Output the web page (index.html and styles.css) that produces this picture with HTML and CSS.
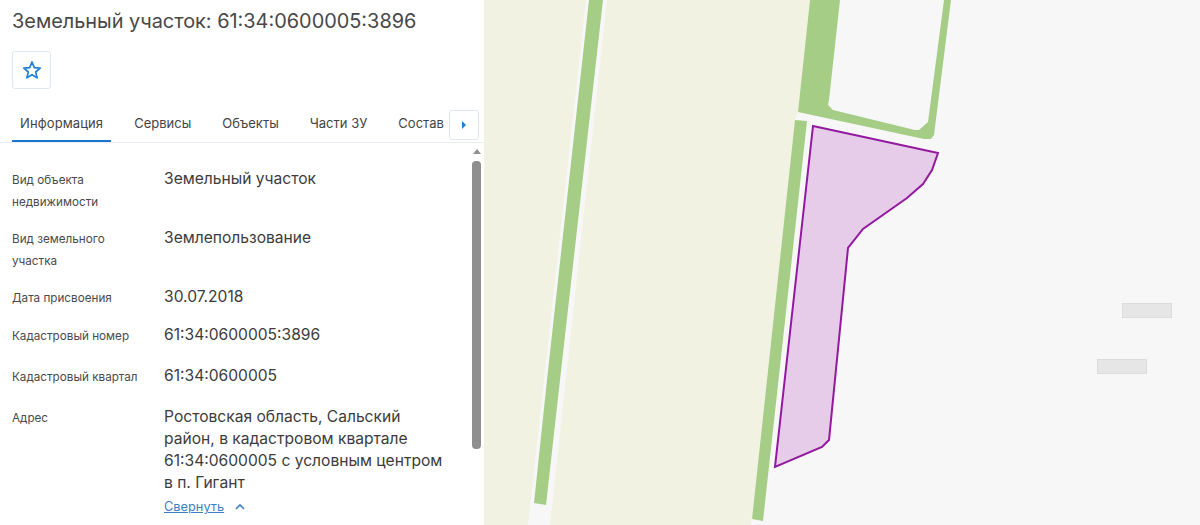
FILE: index.html
```html
<!DOCTYPE html>
<html lang="ru">
  <head>
    <meta charset="UTF-8" />
    <meta name="viewport" content="width=device-width, initial-scale=1.0" />
    <title>Земельный участок</title>
    <link rel="stylesheet" href="styles.css">
  </head>
  <body>
    <div class="panel">
      <h1 class="title">Земельный участок: 61:34:0600005:3896</h1>
      <button class="star-btn" aria-label="В избранное">
        <svg width="20" height="20" viewBox="0 0 20 20">
          <polygon class="star" points="10,2 12.3,7.6 18.2,8.1 13.7,12 15.1,17.9 10,14.7 4.9,17.9 6.3,12 1.8,8.1 7.7,7.6" />
        </svg>
      </button>

      <div class="tabs">
        <a class="tab tab-active">Информация</a>
        <a class="tab">Сервисы</a>
        <a class="tab">Объекты</a>
        <a class="tab">Части ЗУ</a>
        <a class="tab">Состав</a>
        <button class="tab-next" aria-label="Дальше">
          <svg width="6" height="8" viewBox="0 0 6 8"><polygon points="1,0 5,4 1,8" /></svg>
        </button>
      </div>

      <div class="info">
        <div class="rows">
          <div class="row">
            <div class="label">Вид объекта недвижимости</div>
            <div class="value">Земельный участок</div>
          </div>
          <div class="row">
            <div class="label">Вид земельного участка</div>
            <div class="value">Землепользование</div>
          </div>
          <div class="row row-date">
            <div class="label">Дата присвоения</div>
            <div class="value">30.07.2018</div>
          </div>
          <div class="row row-num">
            <div class="label">Кадастровый номер</div>
            <div class="value">61:34:0600005:3896</div>
          </div>
          <div class="row row-num">
            <div class="label">Кадастровый квартал</div>
            <div class="value">61:34:0600005</div>
          </div>
          <div class="row">
            <div class="label">Адрес</div>
            <div class="value">
              Ростовская область, Сальский район, в кадастровом квартале 61:34:0600005 с условным центром в п. Гигант
              <div class="collapse">
                <a class="collapse-link">Свернуть</a>
                <svg width="12" height="8" viewBox="0 0 12 8"><polyline class="chevron" points="2,6 6,2 10,6" /></svg>
              </div>
            </div>
          </div>
        </div>
        <div class="scrollbar">
          <div class="scroll-arrow"></div>
          <div class="scroll-thumb"></div>
        </div>
      </div>
    </div>

    <div class="map">
      <svg class="map-svg" viewBox="484 0 716 525" width="716" height="525">
        <polygon class="land" points="484,0 586,0 528,525 484,525" />
        <polygon class="land" points="607,0 810,0 798,112 795,120 751,525 550,525" />
        <polygon class="green" points="589,0 603,0 560,380 546,505 534,503 547,380" />
        <polygon class="green" points="810,0 840,0 829,100 828,105 833,110 915,130 919,130 928,122 944,0 951,0 934,135 931,139 924,139 798,112" />
        <polygon class="green" points="795,120 807,121 763,521 752,519" />
        <polygon class="parcel" points="813,126 938,153 932,170 923,184 907,198 863,229 848,248 829,440 822,447 775,467" />
        <rect class="building" x="1122.5" y="303.5" width="49" height="14" />
        <rect class="building" x="1097.5" y="359.5" width="49" height="14" />
      </svg>
    </div>
  </body>
</html>
```

FILE: styles.css
```css
* {
  box-sizing: border-box;
}
body {
  margin: 0;
  height: 525px;
  display: flex;
  overflow: hidden;
  background-color: #f7f7f8;
  font-family: Inter, "Noto Sans", sans-serif;
  color: #3c3c3c;
}

.panel {
  width: 484px;
  flex-shrink: 0;
  height: 525px;
  overflow: hidden;
  background-color: white;
  padding-top: 10px;
}
.title {
  margin: 0 0 18px 12px;
  font-size: 19.9px;
  line-height: 23px;
  font-weight: 400;
  color: #484848;
}
.star-btn {
  display: flex;
  align-items: center;
  justify-content: center;
  width: 39px;
  height: 38px;
  margin-left: 12px;
  padding: 0;
  border: 1px solid #dfe7f0;
  border-radius: 3px;
  background-color: white;
}
.star {
  fill: none;
  stroke: #1f7fd6;
  stroke-width: 1.7;
  stroke-linejoin: round;
}

.tabs {
  position: relative;
  display: flex;
  gap: 15px;
  height: 33px;
  margin-top: 21px;
  padding: 0 4px 0 12px;
  border-bottom: 1px solid #e9edf1;
  white-space: nowrap;
}
.tab {
  height: 32px;
  padding: 0 8px;
  font-size: 13px;
  line-height: 26px;
  color: #444;
}
.tab-active {
  letter-spacing: 0.1px;
  border-bottom: 2px solid #1976d2;
}
.tab-next {
  position: absolute;
  top: 0;
  right: 5px;
  display: flex;
  align-items: center;
  justify-content: center;
  width: 30px;
  height: 30px;
  padding: 0;
  border: 1px solid #dfe7f0;
  border-radius: 3px;
  background-color: white;
}
.tab-next polygon {
  fill: #1f7fd6;
}

.info {
  display: flex;
  height: 382px;
  padding-left: 12px;
}
.rows {
  width: 460px;
  padding-top: 26px;
}
.row {
  display: grid;
  grid-template-columns: 152px 1fr;
  margin-bottom: 15px;
}
.row-date {
  min-height: 23px;
}
.row-num {
  min-height: 26px;
}
.label {
  font-size: 11.7px;
  line-height: 22px;
  color: #4a4a4a;
  padding-right: 20px;
}
.value {
  margin-top: -1px;
  font-size: 15.6px;
  line-height: 22px;
  padding-right: 24px;
  color: #3c3c3c;
}
.collapse {
  display: flex;
  align-items: center;
  gap: 10px;
  height: 24px;
  margin-top: 1px;
}
.collapse-link {
  font-size: 12.8px;
  color: #3b7fc9;
  text-decoration: underline;
}
.chevron {
  fill: none;
  stroke: #3b7fc9;
  stroke-width: 1.6;
}

.scrollbar {
  width: 10px;
  padding-top: 6px;
}
.scroll-arrow {
  width: 0;
  margin-left: 1px;
  border-left: 4px solid transparent;
  border-right: 4px solid transparent;
  border-bottom: 5px solid #8f8f8f;
}
.scroll-thumb {
  width: 9px;
  height: 288px;
  margin-top: 7px;
  border-radius: 4px;
  background-color: #8f8f8f;
}

.map {
  flex: 1;
  height: 525px;
}
.map-svg {
  display: block;
}
.land {
  fill: #f1f2e2;
}
.green {
  fill: #a5cd86;
}
.parcel {
  fill: #e6cce9;
  stroke: #93199f;
  stroke-width: 2;
}
.building {
  fill: #e6e6e6;
  stroke: #dcdcdc;
}
```
